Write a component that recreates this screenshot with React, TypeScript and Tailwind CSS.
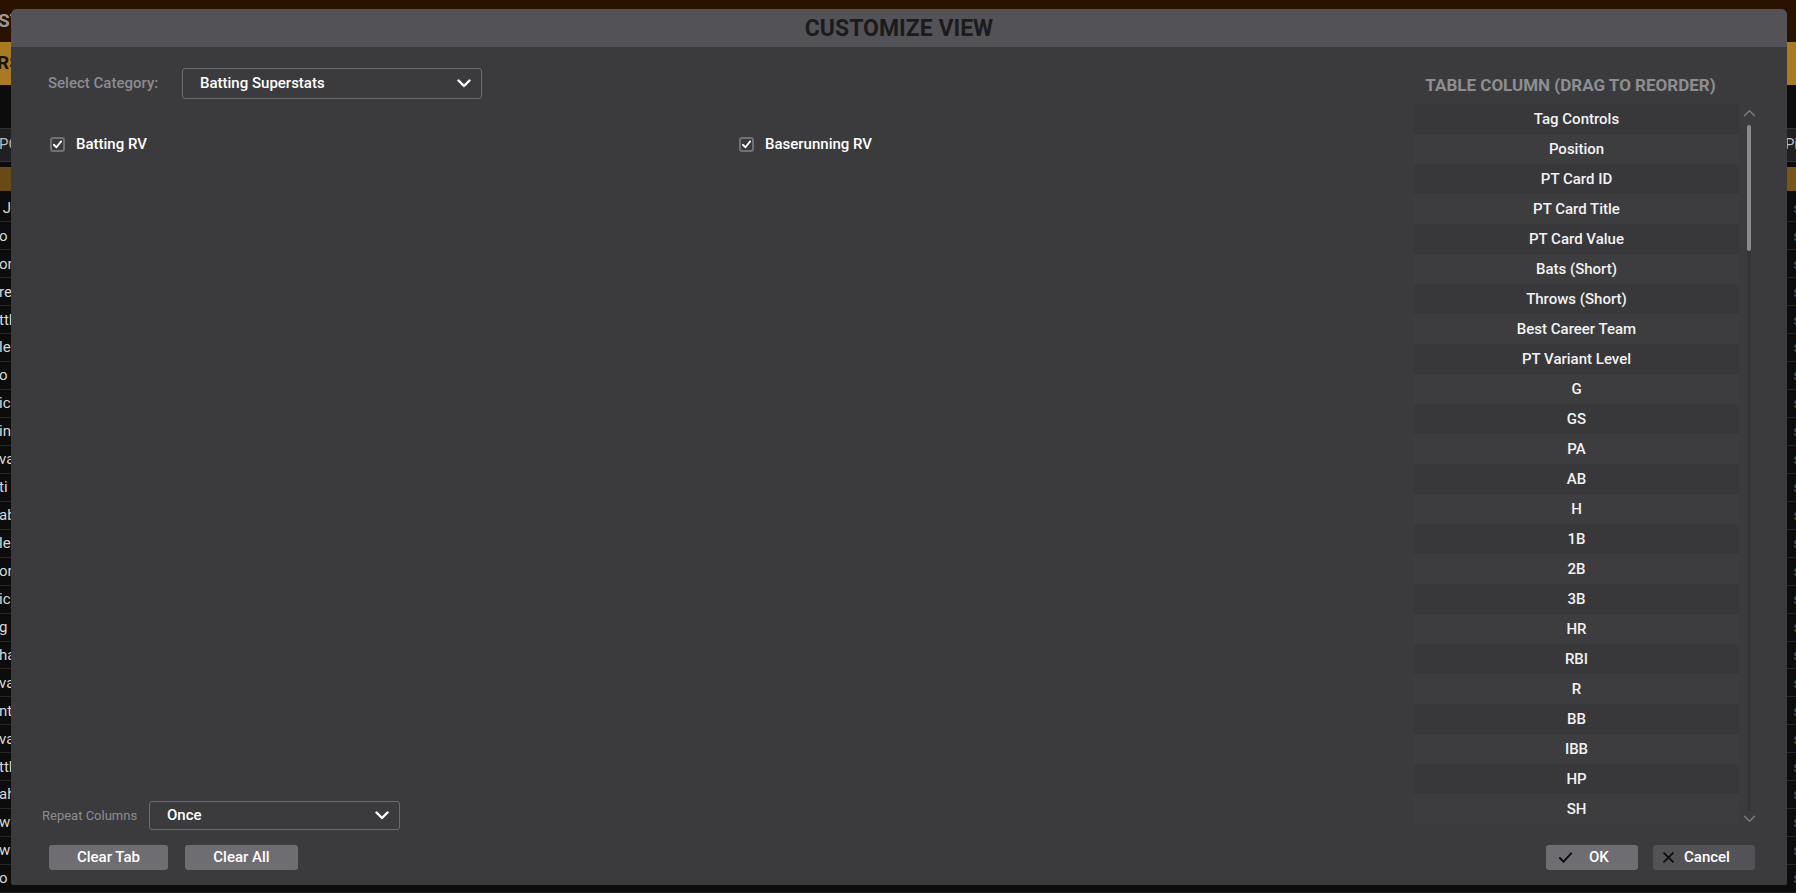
import React from "react";

const columns = [
  "Tag Controls",
  "Position",
  "PT Card ID",
  "PT Card Title",
  "PT Card Value",
  "Bats (Short)",
  "Throws (Short)",
  "Best Career Team",
  "PT Variant Level",
  "G",
  "GS",
  "PA",
  "AB",
  "H",
  "1B",
  "2B",
  "3B",
  "HR",
  "RBI",
  "R",
  "BB",
  "IBB",
  "HP",
  "SH",
];

const leftBits = [
  " J", "o", "on", "re", "ttl", "le", "o", "ic", "in", "va", "ti", "ab", "le",
  "on", "ic", "g", "ha", "va", "nt", "va", "ttl", "ah", "w", "w", "o",
];

function Chevron({ className }: { className?: string }) {
  return (
    <svg viewBox="0 0 14 9" className={className} fill="none">
      <path d="M1.5 1.5 L7 7 L12.5 1.5" stroke="currentColor" strokeWidth="2.4" strokeLinecap="round" strokeLinejoin="round" />
    </svg>
  );
}

function CheckBox({ label }: { label: string }) {
  return (
    <div className="flex items-center gap-[11px]">
      <div className="w-[15px] h-[15px] rounded-[3px] border-2 border-[#707075] bg-[#3b3b3e] flex items-center justify-center">
        <svg viewBox="0 0 12 12" className="w-[11px] h-[11px]" fill="none">
          <path d="M2 6.3 L4.8 9 L10 2.6" stroke="#ffffff" strokeWidth="2" strokeLinecap="round" strokeLinejoin="round" />
        </svg>
      </div>
      <span className="text-[15px] font-medium text-white">{label}</span>
    </div>
  );
}

function SelectBox({ value, className }: { value: string; className: string }) {
  return (
    <div className={"flex items-center justify-between border border-[#6c6c70] rounded-[3px] " + className}>
      <span className="text-[15px] font-medium text-white">{value}</span>
      <Chevron className="w-[14px] h-[9px] text-white" />
    </div>
  );
}

function Backdrop() {
  return (
    <div className="w-full h-[893px] bg-[#0c0c0c] flex flex-col text-[#d8d8d8]">
      <div className="h-[42px] bg-[#2a1200] flex items-center">
        <span className="text-[19px] font-bold text-[#9a9a9a] -ml-[2px]">ST</span>
      </div>
      <div className="h-[43px] bg-gradient-to-r from-[#a87a24] via-[#c0902c] to-[#a87a24] flex items-center">
        <span className="text-[19px] font-bold text-[#1a1205] -ml-[3px]">RS</span>
      </div>
      <div className="h-[43px] bg-[#0c0c0c]" />
      <div className="h-[34px] bg-[#202020] border-y border-[#333] flex items-center justify-between">
        <span className="text-[15px] text-[#bbb] -ml-[1px]">PO</span>
        <span className="text-[15px] text-[#bbb] -mr-[2px]">Pi</span>
      </div>
      <div className="h-[5px]" />
      <div className="h-[24px] bg-gradient-to-r from-[#6a4a14] to-[#7a5518]" />
      <div className="h-[4px]" />
      {leftBits.map((t, i) => (
        <div key={i} className="h-[28px] border-b border-[#262626] flex items-center justify-between">
          <span className="text-[15px] whitespace-pre -ml-[1px]">{t}</span>
          <span className="text-[15px] text-[#555] -mr-[5px]">s</span>
        </div>
      ))}
    </div>
  );
}

export default function App() {
  return (
    <div className="relative w-[1796px] h-[893px] overflow-hidden font-[Roboto,'Liberation_Sans',sans-serif]">
      <Backdrop />

      {/* Modal */}
      <div className="absolute left-[11px] top-[9px] w-[1776px] h-[876px] rounded-t-[6px] rounded-b-[2px] overflow-hidden bg-[#3b3b3e] flex flex-col">
        <div className="h-[38px] shrink-0 bg-[#535257] flex items-center justify-center pt-[3px]">
          <h1 className="text-[23px] font-bold text-[#1b1b1d]">CUSTOMIZE VIEW</h1>
        </div>

        <div className="flex-1 flex min-h-0">
          {/* Left side */}
          <div className="flex-1 min-w-0 flex flex-col pt-[21px] pb-[15px]">
            <div className="flex items-center pl-[37px]">
              <span className="w-[134px] text-[15px] font-medium text-[#8c8c90]">Select Category:</span>
              <SelectBox value="Batting Superstats" className="w-[300px] h-[31px] pl-[17px] pr-[10px]" />
            </div>

            <div className="grid grid-cols-[689px_1fr] pl-[39px] mt-[34px]">
              <CheckBox label="Batting RV" />
              <CheckBox label="Baserunning RV" />
            </div>

            <div className="flex-1" />

            <div className="flex items-center pl-[31px]">
              <span className="w-[107px] text-[13px] text-[#8c8c90]">Repeat Columns</span>
              <SelectBox value="Once" className="w-[251px] h-[29px] pl-[17px] pr-[10px]" />
            </div>

            <div className="flex gap-[17px] pl-[38px] mt-[15px]">
              <button className="w-[119px] h-[25px] rounded-[3px] bg-[#6e6d72] text-[15px] text-white font-medium">Clear Tab</button>
              <button className="w-[113px] h-[25px] rounded-[3px] bg-[#6e6d72] text-[15px] text-white font-medium">Clear All</button>
            </div>
          </div>

          {/* Right side */}
          <div className="w-[345px] shrink-0 mr-[28px] flex flex-col pb-[15px]">
            <div className="h-[57px] flex items-end justify-center pr-[32px] pb-[6px]">
              <span className="text-[17px] font-bold text-[#8e8e91]">TABLE COLUMN (DRAG TO REORDER)</span>
            </div>

            <div className="flex h-[722px]">
              <div className="w-[325px] flex flex-col overflow-hidden">
                {columns.map((c, i) => (
                  <div
                    key={c}
                    className={
                      "h-[30px] shrink-0 flex items-center justify-center text-[15px] font-medium text-[#f2f2f2] " +
                      (i % 2 === 0 ? "bg-[#38383b]" : "bg-[#3d3d40]")
                    }
                  >
                    {c}
                  </div>
                ))}
              </div>
              <div className="w-[20px] flex flex-col items-center">
                <svg viewBox="0 0 14 9" className="w-[13px] h-[8px] mt-[5px] text-[#77777b]" fill="none">
                  <path d="M1.5 7.5 L7 2 L12.5 7.5" stroke="currentColor" strokeWidth="1.8" strokeLinecap="round" strokeLinejoin="round" />
                </svg>
                <div className="flex-1 w-[4px] mt-[8px] mb-[4px] rounded-full bg-[#353538] flex flex-col">
                  <div className="h-[126px] rounded-full bg-[#8b8b8e]" />
                </div>
                <svg viewBox="0 0 14 9" className="w-[13px] h-[8px] mb-[3px] text-[#77777b]" fill="none">
                  <path d="M1.5 1.5 L7 7 L12.5 1.5" stroke="currentColor" strokeWidth="1.8" strokeLinecap="round" strokeLinejoin="round" />
                </svg>
              </div>
            </div>

            <div className="flex-1" />

            <div className="flex justify-end gap-[15px] pr-[4px]">
              <button className="w-[92px] h-[25px] rounded-[3px] bg-[#6e6d72] flex items-center pl-[12px] gap-[16px] text-[15px] text-white font-medium">
                <svg viewBox="0 0 16 16" className="w-[15px] h-[15px]" fill="none">
                  <path d="M2 8.5 L6 12.5 L14 3.5" stroke="#0d0d0d" strokeWidth="2" strokeLinecap="round" strokeLinejoin="round" />
                </svg>
                OK
              </button>
              <button className="w-[102px] h-[25px] rounded-[3px] bg-[#535257] flex items-center pl-[9px] gap-[9px] text-[15px] text-white font-medium">
                <svg viewBox="0 0 16 16" className="w-[13px] h-[13px]" fill="none">
                  <path d="M2.5 2.5 L13.5 13.5 M13.5 2.5 L2.5 13.5" stroke="#0d0d0d" strokeWidth="2.2" strokeLinecap="round" />
                </svg>
                Cancel
              </button>
            </div>
          </div>
        </div>
      </div>
    </div>
  );
}
